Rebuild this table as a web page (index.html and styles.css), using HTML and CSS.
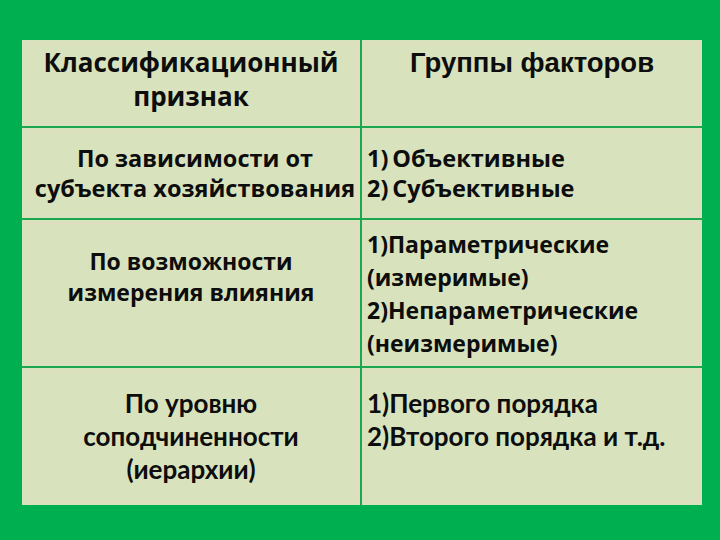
FILE: index.html
```html
<!DOCTYPE html>
<html lang="ru">
<head>
<meta charset="utf-8">
<link rel="stylesheet" href="styles.css">
</head>
<body>
<div class="table">
  <div class="cell head-left">Классификационный<br>признак</div>
  <div class="cell head-right">Группы факторов</div>

  <div class="cell r2 center shift">По зависимости от<br>субъекта хозяйствования</div>
  <div class="cell r2 list">1)&#8201;Объективные<br>2)&#8201;Субъективные</div>

  <div class="cell r3l center">По возможности<br>измерения влияния</div>
  <div class="cell r3r list">1)Параметрические<br>(измеримые)<br>2)Непараметрические<br>(неизмеримые)</div>

  <div class="cell r4 center">По уровню<br>соподчиненности<br>(иерархии)</div>
  <div class="cell r4 list">1)Первого порядка<br>2)Второго порядка и т.д.</div>
</div>
</body>
</html>
```

FILE: styles.css
```css
html, body {
  margin: 0;
  padding: 0;
}
body {
  width: 720px;
  height: 540px;
  background: #00af4f;
  overflow: hidden;
  color: #0d0d0d;
}
.table {
  margin: 40px 0 0 22px;
  width: 680px;
  display: grid;
  grid-template-columns: 338px 340px;
  grid-template-rows: 86px 90px 146px 137px;
  gap: 2px;
  background: #1ca650;
}
.cell {
  background: #d8e3bd;
  outline: 1px solid #e6dac4;
  outline-offset: -4px;
  font-family: "Open Sans", "DejaVu Sans", sans-serif;
  font-weight: 700;
  box-sizing: border-box;
  white-space: nowrap;
}
.center { text-align: center; }
.shift { padding-left: 8px; }
.list { padding-left: 5px; }
.head-left {
  text-align: center;
  font-size: 26px;
  line-height: 34px;
  padding-top: 5px;
}
.head-right {
  text-align: center;
  font-family: "Liberation Sans", Arial, sans-serif;
  font-weight: 700;
  font-size: 27.5px;
  line-height: 34px;
  padding-top: 6px;
}
.r2 {
  font-size: 23.5px;
  line-height: 30px;
  padding-top: 15px;
}
.r3l {
  font-size: 23px;
  line-height: 31px;
  padding-top: 26px;
}
.r3r {
  font-size: 23px;
  line-height: 33px;
  padding-top: 8px;
}
.r4 {
  font-family: Lato, "Open Sans", sans-serif;
  font-weight: 700;
  font-size: 26px;
  line-height: 33px;
  padding-top: 19px;
}
```
